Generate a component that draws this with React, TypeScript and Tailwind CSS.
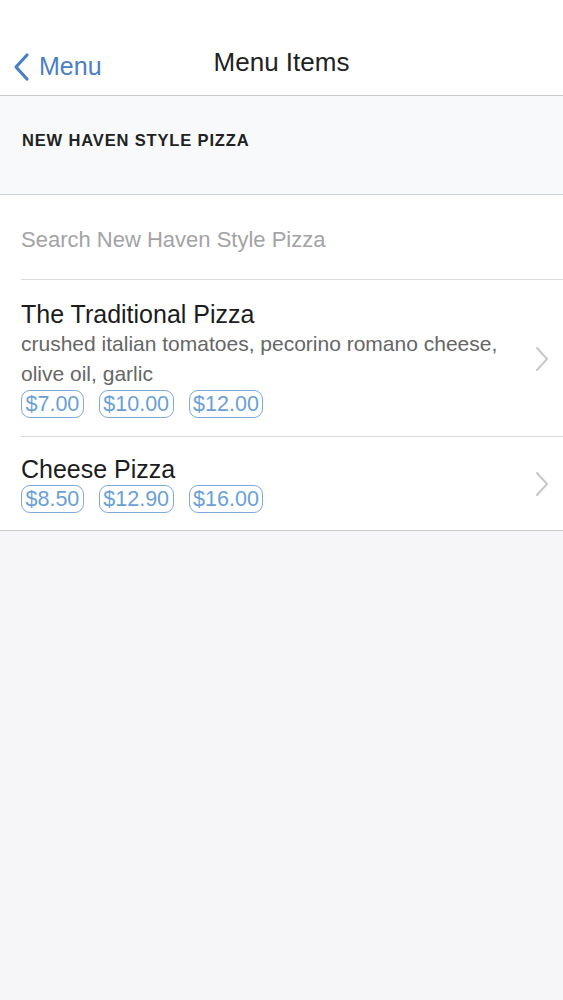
interface MenuItem {
  name: string;
  description?: string;
  prices: string[];
}

const items: MenuItem[] = [
  {
    name: 'The Traditional Pizza',
    description: 'crushed italian tomatoes, pecorino romano cheese, olive oil, garlic',
    prices: ['$7.00', '$10.00', '$12.00'],
  },
  {
    name: 'Cheese Pizza',
    prices: ['$8.50', '$12.90', '$16.00'],
  },
];

const BackChevron = () => (
  <svg width="20" height="30" viewBox="0 0 20 30" fill="none">
    <path d="M16 3 L5 15 L16 27" stroke="#4a80c2" strokeWidth="3.2" strokeLinecap="round" strokeLinejoin="round" />
  </svg>
);

const RowChevron = () => (
  <svg width="16" height="26" viewBox="0 0 16 26" fill="none">
    <path d="M3 2 L13 13 L3 24" stroke="#c7c7cc" strokeWidth="2" strokeLinecap="round" strokeLinejoin="round" />
  </svg>
);

export default function App() {
  return (
    <div className="min-h-[1000px] bg-[#f6f6f8] font-['Liberation_Sans',Arial,sans-serif]">
      <div className="relative flex h-[96px] items-center justify-center border-b border-[#c9c9cc] bg-white">
        <div className="absolute left-[11px] top-[48px] flex items-center gap-[8px]">
          <BackChevron />
          <span className="text-[25px] text-[#4a80c2]">Menu</span>
        </div>
        <span className="pt-[30px] text-[26px] text-[#222]">Menu Items</span>
      </div>

      <div className="h-[99px] border-b border-[#cfd2d6] bg-[#f7f9fb] px-[22px] pt-[32px]">
        <span className="text-[16.5px] font-bold uppercase tracking-[0.85px] text-[#222]">New Haven Style Pizza</span>
      </div>

      <div className="bg-white">
        <div className="flex h-[84px] items-center px-[21px] pt-[4px]">
          <span className="text-[22px] text-[#a3a3a6]">Search New Haven Style Pizza</span>
        </div>

        <div className="ml-[21px] border-t border-[#dcdcde]" />

        {items.map((item, i) => (
          <div key={item.name}>
            {i > 0 && <div className="ml-[21px] border-t border-[#dcdcde]" />}
            <div
              className={
                item.description
                  ? 'flex items-center pl-[21px] pr-[13px] pt-[19px] pb-[18px]'
                  : 'flex items-center pl-[21px] pr-[13px] pt-[17px] pb-[17px]'
              }
            >
              <div className="flex-1">
                <div className="text-[25px] leading-[30px] text-[#1c1c1c]">{item.name}</div>
                {item.description && (
                  <div className="pr-[20px] text-[21px] leading-[30px] text-[#666]">{item.description}</div>
                )}
                <div className="mt-[1px] flex gap-[15px]">
                  {item.prices.map((p) => (
                    <span
                      key={p}
                      className="rounded-[9px] border border-[#7ea9de] px-[3.5px] text-[21.5px] leading-[26px] text-[#6a9fd6]"
                    >
                      {p}
                    </span>
                  ))}
                </div>
              </div>
              <RowChevron />
            </div>
          </div>
        ))}
      </div>
      <div className="border-t border-[#cbcbce]" />
    </div>
  );
}
